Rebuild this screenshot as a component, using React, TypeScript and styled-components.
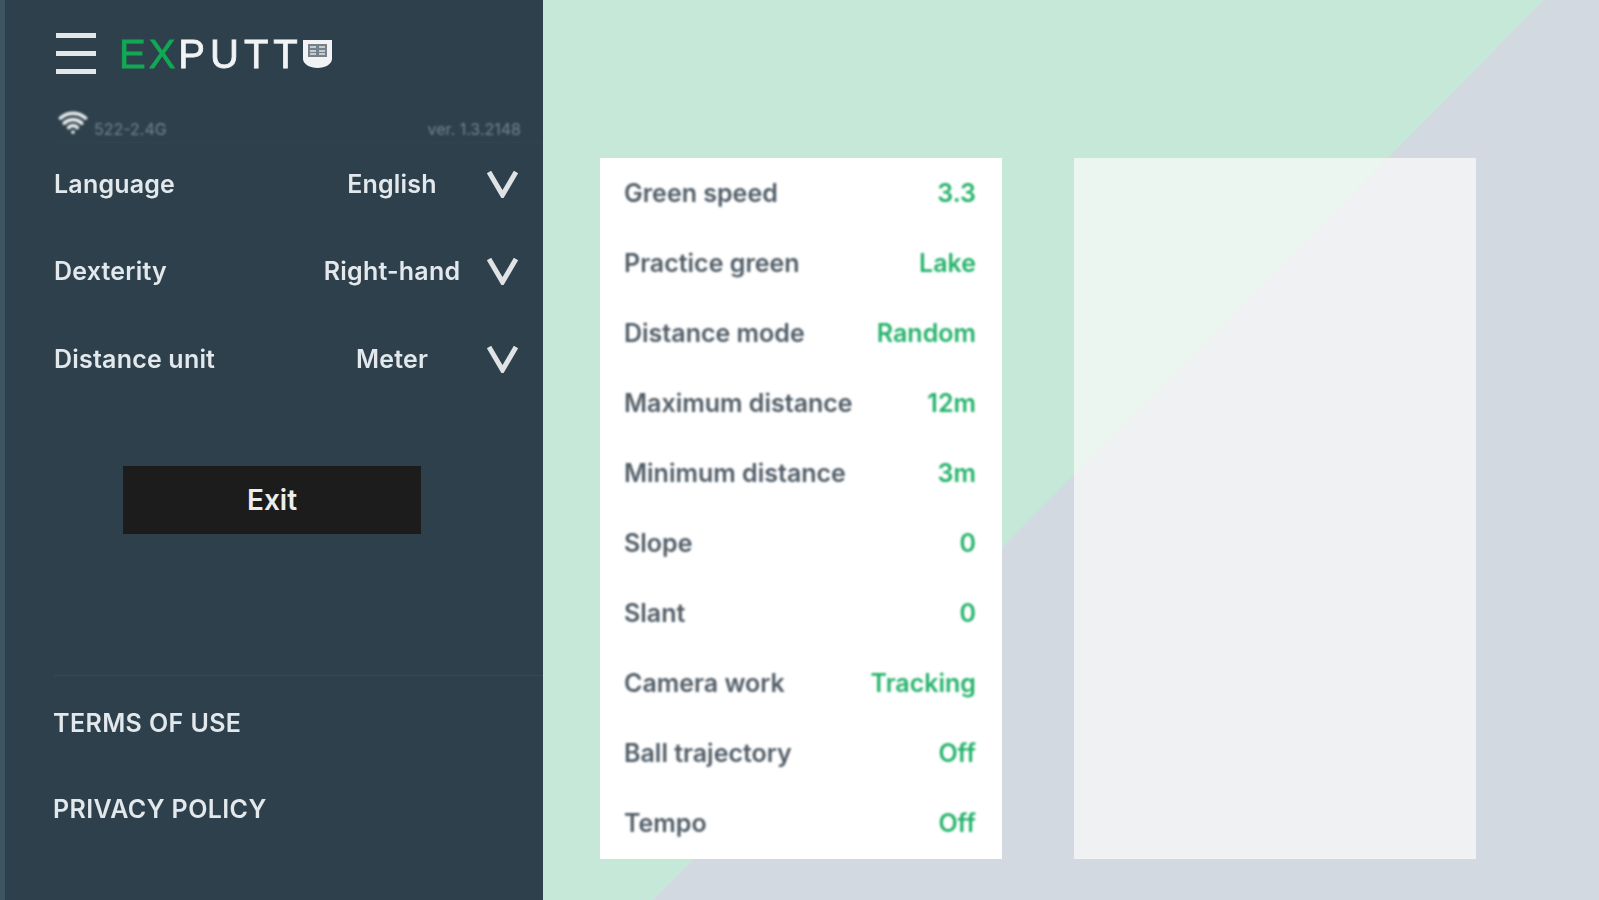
import React from "react";
import styled, { createGlobalStyle } from "styled-components";
import { Wifi } from "lucide-react";

const GlobalStyle = createGlobalStyle`
  html, body {
    margin: 0;
    padding: 0;
    background: #d2d9e1;
  }
  * {
    box-sizing: border-box;
  }
`;

const Page = styled.div`
  display: flex;
  width: 1599px;
  height: 900px;
  overflow: hidden;
  font-family: "Inter", "Noto Sans", sans-serif;
`;

const Sidebar = styled.aside`
  display: flex;
  flex-direction: column;
  flex: 0 0 543px;
  height: 900px;
  background: #2d404c;
  border-left: 5px solid #3d5561;
  color: #e2e8eb;
`;

const Header = styled.div`
  display: flex;
  align-items: center;
  gap: 23px;
  height: 78px;
  padding: 29px 0 0 51px;
`;

const MenuButton = styled.div`
  display: flex;
  flex-direction: column;
  justify-content: space-between;
  width: 40px;
  height: 41px;
  filter: blur(0.7px);
`;

const MenuBar = styled.span`
  display: block;
  height: 5px;
  background: #e4e7e9;
`;

const Logo = styled.div`
  display: flex;
  align-items: center;
  font-family: "Liberation Sans", sans-serif;
  font-size: 40px;
  line-height: 40px;
  letter-spacing: 5px;
  color: #f1f3f4;
  -webkit-text-stroke: 0.8px currentColor;
  filter: blur(0.7px);
`;

const LogoAccent = styled.span`
  color: #12a854;
  letter-spacing: 3px;
`;

const StatusRow = styled.div`
  display: flex;
  align-items: flex-end;
  justify-content: space-between;
  height: 65px;
  margin-left: 49px;
  padding: 0 22px 5px 4px;
  border-bottom: 1px solid #364a56;
  filter: blur(0.9px);
`;

const WifiGroup = styled.div`
  display: flex;
  align-items: flex-end;
  gap: 6px;
`;

const StatusText = styled.span`
  font-size: 16px;
  line-height: 16px;
  color: #73838d;
`;

const SettingRow = styled.div<{ $first?: boolean }>`
  display: grid;
  grid-template-columns: 1fr 162px 46px;
  align-items: center;
  height: 87.5px;
  margin-top: ${(p) => (p.$first ? "-3px" : "0")};
  padding: 0 24px 0 49px;
  font-size: 25px;
  font-weight: 600;
  letter-spacing: 0.2px;
  filter: blur(0.7px);
`;

const SettingValue = styled.span`
  text-align: center;
`;

const Chevron = styled.svg`
  justify-self: end;
  width: 33px;
  height: 28px;
`;

const ExitButton = styled.button`
  display: block;
  width: 298px;
  height: 68px;
  margin: 63px 0 0 118px;
  padding: 0;
  border: 0;
  background: #1c1c1c;
  color: #eceeee;
  font-family: inherit;
  font-size: 28px;
  font-weight: 600;
`;

const Footer = styled.div`
  display: flex;
  flex-direction: column;
  gap: 42px;
  margin: 141px 0 0 49px;
  padding-top: 25px;
  border-top: 1px solid #364a56;
`;

const FooterLink = styled.a`
  font-size: 25px;
  line-height: 44px;
  font-weight: 600;
  letter-spacing: 0.4px;
  margin-left: -1px;
  filter: blur(0.7px);
`;

const Main = styled.main`
  position: relative;
  display: flex;
  flex: 1;
  align-items: flex-start;
  gap: 72px;
  padding: 158px 0 0 57px;
  &::before {
    content: "";
    position: absolute;
    inset: 0;
    background: #c6e8d9;
    clip-path: polygon(0 0, 1001px 0, 110px 900px, 0 900px);
  }
`;

const OptionsCard = styled.section`
  position: relative;
  width: 402px;
  height: 701px;
  background: #ffffff;
`;

const OptionRow = styled.div`
  display: flex;
  align-items: center;
  justify-content: space-between;
  height: 70px;
  padding: 0 26px 0 24px;
  font-size: 25px;
  font-weight: 600;
  color: #505c66;
  filter: blur(0.8px);
`;

const OptionValue = styled.span`
  color: #25b26b;
`;

const PreviewCard = styled.section`
  position: relative;
  width: 402px;
  height: 701px;
  background: rgba(255, 253, 252, 0.66);
`;

const settings = [
  { label: "Language", value: "English" },
  { label: "Dexterity", value: "Right-hand" },
  { label: "Distance unit", value: "Meter" },
];

const options = [
  { label: "Green speed", value: "3.3" },
  { label: "Practice green", value: "Lake" },
  { label: "Distance mode", value: "Random" },
  { label: "Maximum distance", value: "12m" },
  { label: "Minimum distance", value: "3m" },
  { label: "Slope", value: "0" },
  { label: "Slant", value: "0" },
  { label: "Camera work", value: "Tracking" },
  { label: "Ball trajectory", value: "Off" },
  { label: "Tempo", value: "Off" },
];

export default function App() {
  return (
    <Page>
      <GlobalStyle />
      <Sidebar>
        <Header>
          <MenuButton>
            <MenuBar />
            <MenuBar />
            <MenuBar />
          </MenuButton>
          <Logo>
            <LogoAccent>EX</LogoAccent>PUTT
            <svg width="29" height="30" viewBox="0 0 29 30">
              <path d="M0 1h29v19c0 5-7 9-14.500 9S0 25 0 20z" fill="#f1f3f4" />
              <rect x="5" y="5" width="19" height="13" fill="#75828a" />
              <path d="M7 8h6M16 8h6M7 12h6M16 12h6M7 15h6M16 15h6" stroke="#dfe3e5" strokeWidth="1.500" />
            </svg>
          </Logo>
        </Header>
        <StatusRow>
          <WifiGroup>
            <Wifi size={30} strokeWidth={3} color="#e4e7e9" />
            <StatusText>522-2.4G</StatusText>
          </WifiGroup>
          <StatusText>ver. 1.3.2148</StatusText>
        </StatusRow>
        {settings.map((s, i) => (
          <SettingRow key={s.label} $first={i === 0}>
            <span>{s.label}</span>
            <SettingValue>{s.value}</SettingValue>
            <Chevron viewBox="0 0 33 28">
              <path d="M3 2l13.500 23L30 2" fill="none" stroke="#dfe3e5" strokeWidth="5" />
            </Chevron>
          </SettingRow>
        ))}
        <ExitButton>Exit</ExitButton>
        <Footer>
          <FooterLink>TERMS OF USE</FooterLink>
          <FooterLink>PRIVACY POLICY</FooterLink>
        </Footer>
      </Sidebar>
      <Main>
        <OptionsCard>
          {options.map((o) => (
            <OptionRow key={o.label}>
              <span>{o.label}</span>
              <OptionValue>{o.value}</OptionValue>
            </OptionRow>
          ))}
        </OptionsCard>
        <PreviewCard />
      </Main>
    </Page>
  );
}
